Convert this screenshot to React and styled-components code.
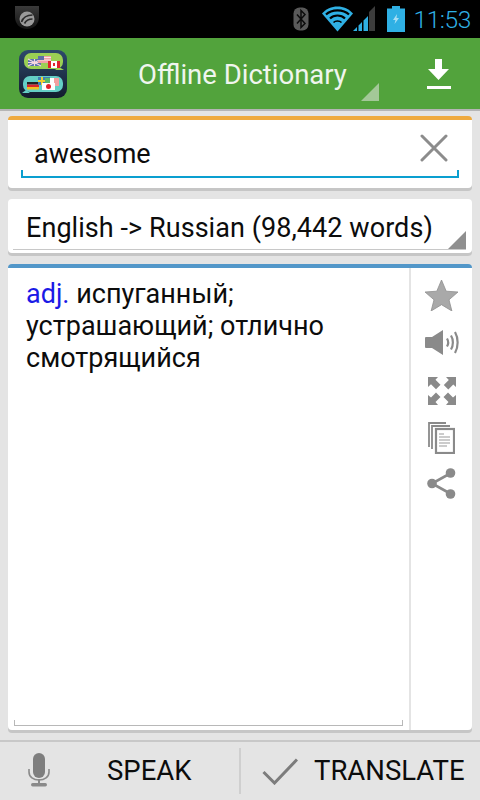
import React from 'react';
import styled, { createGlobalStyle } from 'styled-components';

const GlobalStyle = createGlobalStyle`
  html, body {
    margin: 0;
    padding: 0;
    background: #e4e4e4;
  }
  body {
    font-family: Roboto, "Noto Sans", sans-serif;
    color: #0c0c0c;
  }
`;

const Screen = styled.div`
  width: 480px;
  height: 800px;
  display: flex;
  flex-direction: column;
  overflow: hidden;
`;

const StatusBar = styled.div`
  flex: 0 0 38px;
  background: #000;
  display: flex;
  align-items: center;
  padding: 0 9px 0 15px;
`;

const StatusRight = styled.div`
  margin-left: auto;
  display: flex;
  align-items: center;
`;

const Clock = styled.span`
  font-size: 24.5px;
  font-weight: 300;
  color: #2fb0e4;
  margin-left: 8px;
  letter-spacing: -0.4px;
`;

const AppBar = styled.div`
  flex: 0 0 73px;
  box-sizing: border-box;
  background: #52a33c;
  border-bottom: 2px solid #b5b5b5;
  display: flex;
  align-items: center;
  padding: 0 29px 0 19px;
`;

const AppTitleBox = styled.div`
  position: relative;
  flex: 1;
  height: 100%;
  display: flex;
  align-items: center;
`;

const AppTitle = styled.span`
  font-size: 27.5px;
  color: #f0f5ee;
  margin-left: 71px;
  margin-top: 2px;
`;

const Corner = styled.span`
  position: absolute;
  right: ${p => p.$right}px;
  bottom: ${p => p.$bottom}px;
  width: 0;
  height: 0;
  border-style: solid;
  border-width: 0 0 ${p => p.$size}px ${p => p.$size}px;
  border-color: transparent transparent ${p => p.$color} transparent;
`;

const Body = styled.div`
  flex: 1;
  min-height: 0;
  display: flex;
  flex-direction: column;
  padding: 5px 8px 10px;
  gap: 11px;
`;

const Card = styled.div`
  background: #fff;
  border-radius: 4px;
  box-shadow: 0 3px 0 #c6c6c6;
  box-sizing: border-box;
  border-top: ${p => (p.$accent ? `4px solid ${p.$accent}` : 'none')};
`;

const SearchCard = styled(Card)`
  flex: 0 0 72px;
  padding: 0 13px 0 13px;
`;

const SearchField = styled.div`
  position: relative;
  height: 58px;
  display: flex;
  align-items: center;
  justify-content: space-between;
  padding: 12px 11px 0 13px;
  box-sizing: border-box;
  border-bottom: 2px solid #0a9fd0;
  &::before, &::after {
    content: '';
    position: absolute;
    bottom: 0;
    width: 2px;
    height: 6px;
    background: #0a9fd0;
  }
  &::before { left: 0; }
  &::after { right: 0; }
`;

const SearchText = styled.span`
  font-size: 27px;
`;

const ClearIcon = styled.div`
  display: flex;
  margin-bottom: 13px;
`;

const SpinnerCard = styled(Card)`
  flex: 0 0 54px;
  padding: 0 6px 0 5px;
`;

const SpinnerField = styled.div`
  position: relative;
  height: 51px;
  box-sizing: border-box;
  border-bottom: 1px solid #c8c8c8;
  padding: 13px 0 0 13px;
  font-size: 27px;
  line-height: 32px;
  letter-spacing: 0.06px;
  white-space: nowrap;
`;

const ResultCard = styled(Card)`
  flex: 1;
  min-height: 0;
  display: flex;
`;

const ResultMain = styled.div`
  flex: 1;
  display: flex;
  flex-direction: column;
  padding: 10px 6px 4px;
`;

const ResultText = styled.div`
  flex: 1;
  padding: 0 10px 0 12px;
  font-size: 27px;
  line-height: 32px;
`;

const PartOfSpeech = styled.span`
  color: #1a1ae6;
`;

const ScrollTrack = styled.div`
  height: 5px;
  border: 1px solid #b8b8b8;
  border-top: none;
`;

const SideBar = styled.div`
  flex: 0 0 63px;
  border-left: 2px solid #e4e4e4;
  box-sizing: border-box;
  display: flex;
  flex-direction: column;
  align-items: center;
  padding-top: 3px;
`;

const SideIcon = styled.div`
  height: ${p => p.$h}px;
  display: flex;
  align-items: center;
  justify-content: center;
`;

const BottomBar = styled.div`
  flex: 0 0 60px;
  box-sizing: border-box;
  border-top: 2px solid #c8c8c8;
  display: flex;
  align-items: center;
`;

const BarButton = styled.div`
  display: flex;
  align-items: center;
  height: 46px;
  box-sizing: border-box;
  width: ${p => p.$width}px;
  border-right: ${p => (p.$divider ? '2px solid #cfcfcf' : 'none')};
  padding-left: ${p => p.$pad}px;
`;

const BarLabel = styled.span`
  font-size: 27.5px;
  margin-left: ${p => p.$gap}px;
  margin-top: -2px;
  color: #0c0c0c;
  white-space: nowrap;
`;

const ICON_GRAY = '#8a8a8a';
const STATUS_BLUE = '#2fb0e4';

function LogoBadge() {
  return (
    <svg width="24" height="24" viewBox="0 0 24 24" style={{ marginTop: -4 }}>
      <defs>
        <linearGradient id="badgeBg" x1="0" y1="0" x2="0" y2="1">
          <stop offset="0" stopColor="#3a3a3a" />
          <stop offset="1" stopColor="#141414" />
        </linearGradient>
      </defs>
      <path d="M0 1h24v11c0 7-5 12-12 12S0 19 0 12z" fill="url(#badgeBg)" />
      <circle cx="12" cy="14" r="7.500" fill="#9a9a9a" />
      <path d="M6.500 17c1.500-4.500 5-7 11-7M9.500 18.500c1.500-3 3.500-4.500 8-4.500" stroke="#2b2b2b" strokeWidth="1.700" fill="none" />
    </svg>
  );
}

function Bluetooth() {
  return (
    <svg width="16" height="24" viewBox="0 0 16 24">
      <rect x="0.500" y="0.500" width="15" height="23" rx="6" fill="#5a5a5a" />
      <path d="M4 7.500l8 9-4 4V3.500l4 4-8 9" stroke="#0c0c0c" strokeWidth="1.500" fill="none" />
    </svg>
  );
}

function Wifi() {
  return (
    <svg width="31" height="26" viewBox="0 0 31 26" style={{ marginLeft: 13 }}>
      <path d="M15.500 25.500L0 7.500C4 3 9.500 0.500 15.500 0.500S27 3 31 7.500z" fill={STATUS_BLUE} />
      <path d="M4 8.500C7 5.500 11 4.300 15.500 4.300S24 5.500 27 8.500M8 12.500c2-2 4.500-3 7.500-3s5.500 1 7.500 3" stroke="#000" strokeWidth="2.200" fill="none" />
      <path d="M11.500 16.500c1-1 2.500-1.500 4-1.500s3 .5 4 1.500" stroke="#000" strokeWidth="1.600" fill="none" />
    </svg>
  );
}

function Signal() {
  return (
    <svg width="22" height="26" viewBox="0 0 22 26">
      <path d="M22 0v25h-6V6z" fill="#3c3c3c" />
      <path d="M0 25l4-4v4zM5.500 25v-5.500l3.500-3.500v9zM10.500 25V14.500l4.500-4.500v15z" fill={STATUS_BLUE} />
    </svg>
  );
}

function Battery() {
  return (
    <svg width="18" height="26" viewBox="0 0 18 26" style={{ marginLeft: 12 }}>
      <path d="M5 0h8v2.500h5V26H0V2.500h5z" fill={STATUS_BLUE} />
      <path d="M10 8l-4 6h2.500L7.500 18l4.500-6H9.500z" fill="#a8def4" />
    </svg>
  );
}

function AppIcon() {
  return (
    <svg width="48" height="48" viewBox="0 0 48 48">
      <defs>
        <linearGradient id="iconBg" x1="0" y1="0" x2="0" y2="1">
          <stop offset="0" stopColor="#2e4a6b" />
          <stop offset="1" stopColor="#121c2e" />
        </linearGradient>
      </defs>
      <rect width="48" height="48" rx="9" fill="url(#iconBg)" />
      <rect x="5" y="3" width="39" height="16" rx="7" fill="#9bd054" />
      <path d="M40 17l5 3h-9z" fill="#9bd054" />
      <rect x="4" y="26" width="40" height="16" rx="7" fill="#64cfc6" />
      <path d="M7 40l-4 3h8z" fill="#64cfc6" />
      <rect x="9" y="9" width="13" height="7" rx="2" fill="#5b6fb0" />
      <path d="M9 9l13 7M22 9L9 16M15.500 9v7M9 12.500h13" stroke="#f4d8e0" strokeWidth="1.200" />
      <rect x="19" y="6" width="13" height="7" fill="#f0a0a8" />
      <path d="M19 7.500h13M19 10h13" stroke="#fbe4e4" strokeWidth="1" />
      <rect x="19" y="6" width="6" height="4" fill="#5e6fa8" />
      <rect x="29" y="11" width="12" height="7" fill="#fff" />
      <rect x="29" y="11" width="3" height="7" fill="#e0242c" />
      <rect x="38" y="11" width="3" height="7" fill="#e0242c" />
      <rect x="34" y="13" width="2" height="3" fill="#e0242c" />
      <rect x="8" y="32" width="12" height="2.500" fill="#222" />
      <rect x="8" y="34.500" width="12" height="2.500" fill="#d8262c" />
      <rect x="8" y="37" width="12" height="2.500" fill="#f0c020" />
      <rect x="19" y="27" width="12" height="8" fill="#3f7fb8" />
      <rect x="22" y="27" width="2" height="8" fill="#f0d030" />
      <rect x="19" y="30" width="12" height="2" fill="#f0d030" />
      <rect x="26" y="28" width="14" height="8" fill="#f4a0a0" />
      <rect x="26" y="28" width="5" height="8" fill="#58b868" />
      <rect x="31" y="28" width="4" height="8" fill="#fff" />
      <rect x="23" y="33" width="13" height="7" fill="#fff" />
      <circle cx="29.500" cy="36.500" r="2.500" fill="#e0242c" />
    </svg>
  );
}

function Download() {
  return (
    <svg width="24" height="32" viewBox="0 0 24 32" style={{ marginTop: 2 }}>
      <path d="M8 0h7v10h7L11.500 21 1 10h7z" fill="#fff" />
      <rect y="27" width="24" height="3" fill="#fff" />
    </svg>
  );
}

function Clear() {
  return (
    <svg width="28" height="28" viewBox="0 0 28 28">
      <path d="M2 2l24 24M26 2L2 26" stroke="#8c8c8c" strokeWidth="3" strokeLinecap="round" />
    </svg>
  );
}

function Star() {
  return (
    <svg width="33" height="31" viewBox="0 0 33 31">
      <path d="M16.500 0l4.700 11.200 11.800.8-9 7.800 2.900 11.200-10.400-6.300L6.100 31 9 19.800 0 12l11.800-.8z" fill="#a9a9a9" stroke="#8f8f8f" strokeWidth="0.800" />
    </svg>
  );
}

function Speaker() {
  return (
    <svg width="34" height="26" viewBox="0 0 34 26">
      <path d="M0 8q0-1 1-1h6l11-7v25L7 18H1q-1 0-1-1z" fill={ICON_GRAY} />
      <path d="M22 8.500c1.500 2.500 1.500 5.500 0 8M26 5.500c2.500 4 2.500 10 0 14M30 2c3.500 6 3.500 15 0 21" stroke={ICON_GRAY} strokeWidth="2.200" fill="none" />
    </svg>
  );
}

function Expand() {
  return (
    <svg width="28" height="28" viewBox="0 0 28 28">
      <path d="M0 0h10L7.500 2.700l5 5-4.500 4.500-5-5L0 10zM28 0v10l-2.700-2.500-5 5L15.800 8l5-5L18 0zM0 28V18l3 2.500 5-5 4.500 4.500-5 5L10 28zM28 28H18l2.500-3-5-5 4.500-4.500 5 5 3-2.500z" fill={ICON_GRAY} />
    </svg>
  );
}

function Copy() {
  return (
    <svg width="27" height="32" viewBox="0 0 27 32">
      <path d="M1 25V1h17" stroke={ICON_GRAY} strokeWidth="1.800" fill="none" />
      <path d="M4 27V4h18" stroke={ICON_GRAY} strokeWidth="1.800" fill="none" />
      <rect x="8" y="7" width="18" height="24" fill="#fff" stroke={ICON_GRAY} strokeWidth="2.200" />
      <path d="M11 12h5M11 15h11M11 18h11M11 21h11M11 24h8" stroke="#9a9a9a" strokeWidth="1.200" />
    </svg>
  );
}

function Share() {
  return (
    <svg width="29" height="31" viewBox="0 0 29 31">
      <path d="M24 5L5 15.500 24 26" stroke={ICON_GRAY} strokeWidth="2.600" fill="none" />
      <circle cx="23.500" cy="5" r="4.800" fill={ICON_GRAY} />
      <circle cx="5" cy="15.500" r="4.800" fill={ICON_GRAY} />
      <circle cx="23.500" cy="26" r="4.800" fill={ICON_GRAY} />
    </svg>
  );
}

function Mic() {
  return (
    <svg width="22" height="34" viewBox="0 0 22 34" style={{ marginTop: -2 }}>
      <rect x="5" y="0" width="12" height="25" rx="6" fill="#7e7e7e" />
      <path d="M1 16v3c0 5 4.500 8 10 8s10-3 10-8v-3" stroke="#8a8a8a" strokeWidth="1.600" fill="none" />
      <rect x="10" y="26" width="2" height="5" fill="#8a8a8a" />
      <rect x="3" y="30" width="16" height="3.500" rx="1.700" fill="#8a8a8a" />
    </svg>
  );
}

function Check() {
  return (
    <svg width="36" height="27" viewBox="0 0 36 27">
      <path d="M1.500 14L12.500 25 35 1.500" stroke="#7c7c7c" strokeWidth="3" fill="none" />
    </svg>
  );
}

export default function App() {
  return (
    <Screen>
      <GlobalStyle />
      <StatusBar>
        <LogoBadge />
        <StatusRight>
          <Bluetooth />
          <Wifi />
          <Signal />
          <Battery />
          <Clock>11:53</Clock>
        </StatusRight>
      </StatusBar>
      <AppBar>
        <AppIcon />
        <AppTitleBox>
          <AppTitle>Offline Dictionary</AppTitle>
          <Corner $right={48} $bottom={8} $size={18} $color="#a3c898" />
        </AppTitleBox>
        <Download />
      </AppBar>
      <Body>
        <SearchCard $accent="#efaa3e">
          <SearchField>
            <SearchText>awesome</SearchText>
            <ClearIcon><Clear /></ClearIcon>
          </SearchField>
        </SearchCard>
        <SpinnerCard>
          <SpinnerField>
            English -&gt; Russian (98,442 words)
            <Corner $right={0} $bottom={0} $size={18} $color="#8f8f8f" />
          </SpinnerField>
        </SpinnerCard>
        <ResultCard $accent="#5297c9">
          <ResultMain>
            <ResultText>
              <PartOfSpeech>adj.</PartOfSpeech> испуганный; устрашающий; отлично смотрящийся
            </ResultText>
            <ScrollTrack />
          </ResultMain>
          <SideBar>
            <SideIcon $h={48}><Star /></SideIcon>
            <SideIcon $h={48}><Speaker /></SideIcon>
            <SideIcon $h={47}><Expand /></SideIcon>
            <SideIcon $h={48}><Copy /></SideIcon>
            <SideIcon $h={43}><Share /></SideIcon>
          </SideBar>
        </ResultCard>
      </Body>
      <BottomBar>
        <BarButton $width={241} $divider $pad={28}>
          <Mic />
          <BarLabel $gap={57}>SPEAK</BarLabel>
        </BarButton>
        <BarButton $width={239} $pad={21}>
          <Check />
          <BarLabel $gap={16}>TRANSLATE</BarLabel>
        </BarButton>
      </BottomBar>
    </Screen>
  );
}
